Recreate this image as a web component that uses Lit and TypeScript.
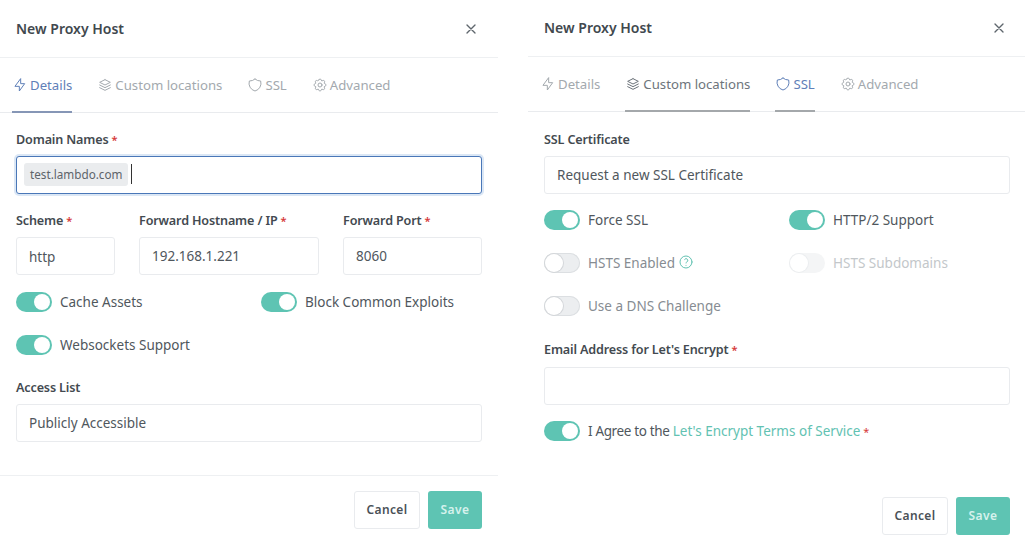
import { LitElement, html, css, svg } from "lit";
import { customElement } from "lit/decorators.js";

const ic = (body: unknown) => html`<svg class="ic" viewBox="0 0 24 24" fill="none" stroke="currentColor" stroke-width="1.5" stroke-linecap="round" stroke-linejoin="round">${body}</svg>`;
const bolt = ic(svg`<path d="M13 3v7h6l-8 11v-7H5z"/>`);
const layers = ic(svg`<path d="M12 4 4 8l8 4 8-4-8-4"/><path d="m4 12 8 4 8-4"/><path d="m4 16 8 4 8-4"/>`);
const shield = ic(svg`<path d="M12 3a12 12 0 0 0 8.500 3A12 12 0 0 1 12 21 12 12 0 0 1 3.500 6 12 12 0 0 0 12 3"/>`);
const gear = ic(svg`<path d="M10.300 4.300c.4-1.800 3-1.800 3.400 0a1.700 1.700 0 0 0 2.600 1.100c1.500-.9 3.300.8 2.400 2.400a1.700 1.700 0 0 0 1 2.500c1.800.4 1.800 3 0 3.400a1.700 1.700 0 0 0-1 2.600c.9 1.500-.9 3.300-2.400 2.400a1.700 1.700 0 0 0-2.600 1c-.4 1.800-3 1.800-3.400 0a1.700 1.700 0 0 0-2.600-1c-1.500.9-3.300-.9-2.400-2.400a1.700 1.700 0 0 0-1-2.600c-1.800-.4-1.800-3 0-3.400a1.700 1.700 0 0 0 1-2.500c-.9-1.600.9-3.300 2.400-2.400 1 .6 2.300.1 2.600-1.100"/><circle cx="12" cy="12" r="3"/>`);
const close = html`<svg class="x" viewBox="0 0 24 24" fill="none" stroke="currentColor" stroke-width="2" stroke-linecap="round"><path d="M18 6 6 18M6 6l12 12"/></svg>`;
const help = html`<svg class="help" viewBox="0 0 24 24" fill="none" stroke="currentColor" stroke-width="1.500" stroke-linecap="round" stroke-linejoin="round"><circle cx="12" cy="12" r="9"/><path d="M12 17v.01"/><path d="M12 13.500a1.500 1.500 0 0 1 1-1.500 2.600 2.600 0 1 0-3-4"/></svg>`;

const req = html`<span class="req">*</span>`;

@customElement("app-root")
export class AppRoot extends LitElement {
  static styles = css`
    :host { display: block; width: 1025px; height: 545px; overflow: hidden; background: #fff;
      font-family: "Noto Sans", sans-serif; font-size: 13.5px; color: #50575d; }
    * { box-sizing: border-box; }
    .page { display: flex; gap: 30px; align-items: flex-start; }
    .modal { width: 498px; flex: none; }
    .right { margin-top: -1px; }
    .head { height: 58px; border-bottom: 1px solid #eef0f2; display: flex; align-items: center; justify-content: space-between; padding: 0 19px 0 16px; }
    .title { font-size: 14px; font-weight: 600; color: #41484e; }
    .x { width: 16px; height: 16px; color: #5f666d; display: block; }
    .tabs { height: 55px; border-bottom: 1px solid #e9ebee; display: flex; padding-left: 12px; gap: 25px; font-size: 13.2px; }
    .tab { height: 55px; display: flex; align-items: center; gap: 2px; color: #a3a9ae; border-bottom: 2px solid transparent; padding-top: 1px; margin-bottom: -1px; }
    .tab.on { color: #5f80b8; border-bottom-color: #8696b6; }
    .tab.mid { color: #6d747b; border-bottom-color: #a4a8ab; }
    .tab.blue { color: #5f80b8; border-bottom-color: #a4a8ab; }
    .ic { width: 16px; height: 16px; display: block; flex: none; }
    .body { padding: 17px 16px 0; }
    .right .body { padding-top: 18px; }
    .label { display: block; font-weight: 600; font-size: 12.6px; letter-spacing: -.15px; line-height: 18px; color: #434a50; padding-top: 1px; margin-bottom: 7px; white-space: nowrap; }
    .req { color: #d63939; margin-left: 3px; font-size: 11px; }
    .input { height: 38px; border: 1px solid #e9ebee; border-radius: 3px; display: flex; align-items: center; padding: 0 12px; color: #50575d; background: #fff; }
    .input.sel { padding-top: 1px; }
    .input.focus { border-color: #4a77b8; box-shadow: 0 0 0 2px #dbe7f5; padding: 0 7px 2px; }
    .chip { background: #eaecee; border-radius: 3px; padding: 0 6px; height: 23px; display: flex; align-items: center; font-size: 11.7px; color: #5d646a; }
    .caret { width: 1px; height: 20px; background: #333; margin-left: 3px; }
    .grid3 { display: grid; grid-template-columns: 99px 180px 139px; gap: 24px; margin-top: 17px; }
    .toggles { display: grid; grid-template-columns: 245px 1fr; row-gap: 23px; margin-top: 17px; }
    .right .toggles { margin-top: 16px; }
    .t { display: flex; align-items: center; gap: 8px; height: 20px; white-space: nowrap; }
    .sw { width: 36px; height: 20px; border-radius: 10px; background: #5ec4b3; position: relative; flex: none; }
    .sw::after { content: ""; position: absolute; top: 2px; right: 2px; width: 16px; height: 16px; border-radius: 50%; background: #fff; }
    .sw.off { background: #eceef0; box-shadow: inset 0 0 0 1px #dcdfe2; }
    .sw.off::after { right: auto; left: 1px; top: 1px; width: 18px; height: 18px; box-shadow: 0 0 0 1px #d4d7da; }
    .sw.dis { background: #f4f5f6; box-shadow: none; }
    .sw.dis::after { box-shadow: 0 0 0 1px #eceef0; }
    .t.muted { color: #868c92; }
    .t.faint { color: #c3c7ca; }
    .help { width: 16px; height: 16px; color: #62c2b2; vertical-align: -2px; }
    .a { color: #62c2b2; }
    .tight { letter-spacing: -.35px; }
    .foot { display: flex; justify-content: flex-end; gap: 8px; padding: 15px 16px 0; }
    .footline { border-top: 1px solid #eef0f2; margin-top: 33px; }
    .btn { height: 38px; border-radius: 3px; display: flex; align-items: center; justify-content: center; font-size: 12px; font-weight: 600; letter-spacing: .4px; padding-bottom: 1px; }
    .cancel { width: 66px; border: 1px solid #e9ebee; color: #4a5157; background: #fff; }
    .save { width: 54px; background: #5ec4b3; color: #d6f2ed; }
    .spacer { height: 56px; }
    .right .foot { padding-top: 0; }
    .al { margin-top: 23px; }
    .em { margin-top: 24px; margin-bottom: 8px; }
  `;

  tabs(active: string, mid: string[] = []) {
    const items: [string, unknown][] = [["Details", bolt], ["Custom locations", layers], ["SSL", shield], ["Advanced", gear]];
    return html`<div class="tabs">${items.map(([n, i]) => html`
      <div class="tab ${n === active && !mid.length ? "on" : ""} ${mid.includes(n) ? (n === active ? "blue" : "mid") : ""}">${i}${n}</div>`)}</div>`;
  }
  tog(label: unknown, cls = "", sw = "") {
    return html`<div class="t ${cls}"><span class="sw ${sw}"></span><span>${label}</span></div>`;
  }
  render() {
    return html`<div class="page">
      <section class="modal">
        <div class="head"><span class="title">New Proxy Host</span>${close}</div>
        ${this.tabs("Details")}
        <div class="body">
          <label class="label">Domain Names${req}</label>
          <div class="input focus"><span class="chip">test.lambdo.com</span><span class="caret"></span></div>
          <div class="grid3">
            <div><label class="label">Scheme${req}</label><div class="input sel">http</div></div>
            <div><label class="label">Forward Hostname / IP${req}</label><div class="input">192.168.1.221</div></div>
            <div><label class="label">Forward Port${req}</label><div class="input">8060</div></div>
          </div>
          <div class="toggles">
            ${this.tog("Cache Assets")}${this.tog("Block Common Exploits")}
            ${this.tog("Websockets Support")}
          </div>
          <label class="label al">Access List</label>
          <div class="input">Publicly Accessible</div>
        </div>
        <div class="footline"></div>
        <div class="foot"><div class="btn cancel">Cancel</div><div class="btn save">Save</div></div>
      </section>
      <section class="modal right">
        <div class="head"><span class="title">New Proxy Host</span>${close}</div>
        ${this.tabs("SSL", ["Custom locations", "SSL"])}
        <div class="body">
          <label class="label">SSL Certificate</label>
          <div class="input">Request a new SSL Certificate</div>
          <div class="toggles">
            ${this.tog("Force SSL")}${this.tog("HTTP/2 Support")}
            ${this.tog(html`HSTS Enabled ${help}`, "muted", "off")}${this.tog("HSTS Subdomains", "faint", "off dis")}
            ${this.tog("Use a DNS Challenge", "muted", "off")}
          </div>
          <label class="label em">Email Address for Let's Encrypt${req}</label>
          <div class="input"></div>
          <div class="toggles">
            <div class="t"><span class="sw"></span><span><span class="tight">I Agree to the </span><span class="a">Let's Encrypt Terms of Service</span>${req}</span></div>
          </div>
        </div>
        <div class="spacer"></div>
        <div class="foot"><div class="btn cancel">Cancel</div><div class="btn save">Save</div></div>
      </section>
    </div>`;
  }
}
